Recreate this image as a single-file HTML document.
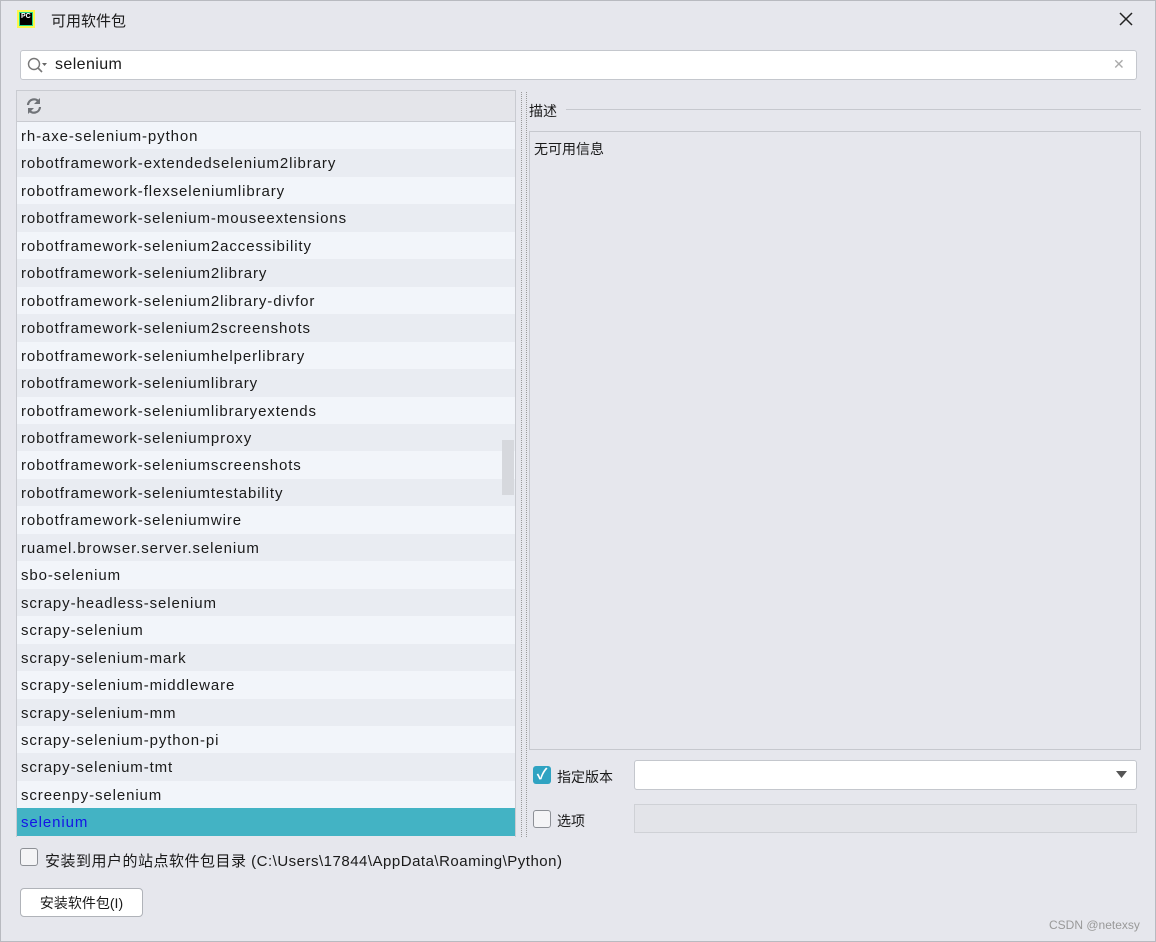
<!DOCTYPE html>
<html><head><meta charset="utf-8"><style>
*{margin:0;padding:0;box-sizing:border-box}
body{width:1156px;height:942px;background:#e6e7ed;font-family:"Liberation Sans","Noto Sans CJK SC",sans-serif;font-size:15px;color:#1a1a1a;position:relative;overflow:hidden}
.abs{position:absolute}
.row{height:27.46px;line-height:29px;padding-left:4px;white-space:nowrap;letter-spacing:0.9px;overflow:hidden}
.row:nth-child(odd){background:#f2f5fa}
.row:nth-child(even){background:#e9ecf2}
.cb{width:18px;height:18px;border:1px solid #8d9096;border-radius:3px;background:#f4f4f6}
</style></head><body>
<div class="abs" style="left:0;top:0;width:1156px;height:942px;border:1px solid #b8bac0"></div>
<div class="abs" style="left:17px;top:10px;width:18px;height:18px;background:#21d789;border:2px solid #fcf84a"><div style="position:absolute;left:1px;top:1px;width:12px;height:12px;background:#000;color:#fff;font-size:7px;font-weight:bold;line-height:8px;padding-left:1px">PC</div></div>
<div class="abs" style="left:51px;top:10px;font-size:15px">可用软件包</div>
<svg class="abs" style="left:1119px;top:12px" width="14" height="14"><path d="M1 1L13 13M13 1L1 13" stroke="#222" stroke-width="1.5"/></svg>
<div class="abs" style="left:20px;top:50px;width:1117px;height:30px;background:#fff;border:1px solid #c4c7cd;border-radius:3px"></div>
<svg class="abs" style="left:26px;top:56px" width="22" height="18"><circle cx="8" cy="8" r="5.5" fill="none" stroke="#777" stroke-width="1.4"/><line x1="12" y1="12" x2="16" y2="16" stroke="#777" stroke-width="1.6"/><path d="M16 7h5l-2.5 3z" fill="#666"/></svg>
<div class="abs" style="left:55px;top:56px;font-size:16px;letter-spacing:0.4px">selenium</div>
<div class="abs" style="left:1113px;top:56px;font-size:14px;color:#aaa">✕</div>
<div class="abs" style="left:16px;top:90px;width:500px;height:32px;background:#e4e5ea;border:1px solid #c9cbd1"></div>
<svg class="abs" style="left:25px;top:97px" width="18" height="18" viewBox="0 0 18 18"><path d="M3 8a6 6 0 0 1 11-3" fill="none" stroke="#707378" stroke-width="2.2"/><path d="M15 1v6h-6z" fill="#707378"/><path d="M15 10a6 6 0 0 1-11 3" fill="none" stroke="#707378" stroke-width="2.2"/><path d="M3 17v-6h6z" fill="#707378"/></svg>
<div class="abs" style="left:16px;top:122px;width:500px;height:715px;border-left:1px solid #c9cbd1;overflow:hidden">
<div class="row">rh-axe-selenium-python</div>
<div class="row">robotframework-extendedselenium2library</div>
<div class="row">robotframework-flexseleniumlibrary</div>
<div class="row">robotframework-selenium-mouseextensions</div>
<div class="row">robotframework-selenium2accessibility</div>
<div class="row">robotframework-selenium2library</div>
<div class="row">robotframework-selenium2library-divfor</div>
<div class="row">robotframework-selenium2screenshots</div>
<div class="row">robotframework-seleniumhelperlibrary</div>
<div class="row">robotframework-seleniumlibrary</div>
<div class="row">robotframework-seleniumlibraryextends</div>
<div class="row">robotframework-seleniumproxy</div>
<div class="row">robotframework-seleniumscreenshots</div>
<div class="row">robotframework-seleniumtestability</div>
<div class="row">robotframework-seleniumwire</div>
<div class="row">ruamel.browser.server.selenium</div>
<div class="row">sbo-selenium</div>
<div class="row">scrapy-headless-selenium</div>
<div class="row">scrapy-selenium</div>
<div class="row">scrapy-selenium-mark</div>
<div class="row">scrapy-selenium-middleware</div>
<div class="row">scrapy-selenium-mm</div>
<div class="row">scrapy-selenium-python-pi</div>
<div class="row">scrapy-selenium-tmt</div>
<div class="row">screenpy-selenium</div>
<div class="row" style="background:#43b3c4;color:#1414e6">selenium</div>
</div>
<div class="abs" style="left:502px;top:440px;width:12px;height:55px;background:#d6d8dd"></div>
<div class="abs" style="left:515px;top:90px;width:1px;height:747px;background:#c9cbd1"></div>
<div class="abs" style="left:521px;top:92px;width:6px;height:745px;border-left:1px dotted #999;border-right:1px dotted #999"></div>
<div class="abs" style="left:529px;top:101px;font-size:14px">描述</div>
<div class="abs" style="left:566px;top:109px;width:575px;height:1px;background:#c6c8ce"></div>
<div class="abs" style="left:529px;top:131px;width:612px;height:619px;border:1px solid #c6c8ce;background:#e6e7ed"></div>
<div class="abs" style="left:534px;top:139px;font-size:14px">无可用信息</div>
<div class="abs" style="left:533px;top:766px;width:18px;height:18px;border-radius:3px;background:#2fa3c2;color:#fff;font-size:15px;line-height:18px;text-align:center;font-weight:bold">✓</div>
<div class="abs" style="left:557px;top:767px;font-size:14px">指定版本</div>
<div class="abs" style="left:634px;top:760px;width:503px;height:30px;background:#fff;border:1px solid #c4c7cd;border-radius:3px"></div>
<svg class="abs" style="left:1116px;top:771px" width="12" height="8"><path d="M0 0h11l-5.5 7z" fill="#555"/></svg>
<div class="cb abs" style="left:533px;top:810px"></div>
<div class="abs" style="left:557px;top:811px;font-size:14px">选项</div>
<div class="abs" style="left:634px;top:804px;width:503px;height:29px;background:#e3e4e9;border:1px solid #cfd1d6"></div>
<div class="cb abs" style="left:20px;top:848px"></div>
<div class="abs" style="left:45px;top:850px;font-size:15px;letter-spacing:0.5px">安装到用户的站点软件包目录 (C:\Users\17844\AppData\Roaming\Python)</div>
<div class="abs" style="left:20px;top:888px;width:123px;height:29px;background:#fff;border:1px solid #b0b3b9;border-radius:4px;text-align:center;line-height:29px;font-size:14px">安装软件包(I)</div>
<div class="abs" style="left:1049px;top:918px;font-size:12px;color:#999">CSDN @netexsy</div>
</body></html>
